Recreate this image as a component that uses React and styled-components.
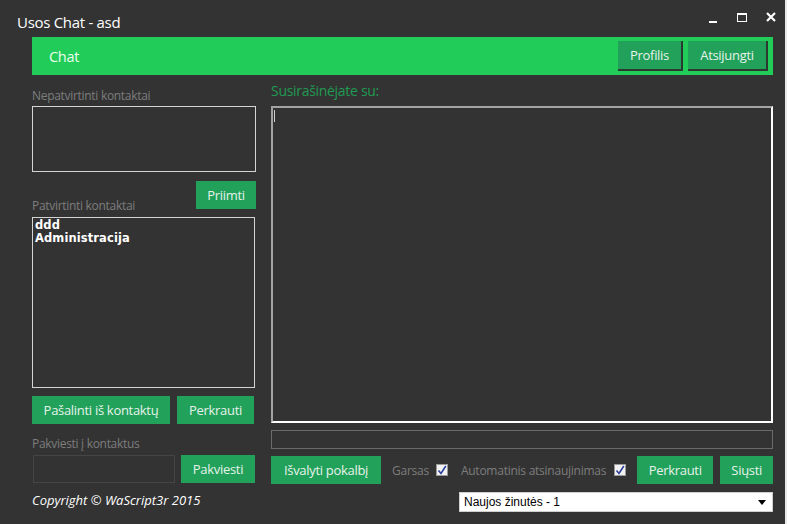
import React from 'react';
import styled, { createGlobalStyle } from 'styled-components';

const GlobalStyle = createGlobalStyle`
  html, body {
    margin: 0;
    padding: 0;
    background: #e9e9e9;
  }
  body {
    font-family: "Open Sans", "Noto Sans", sans-serif;
  }
`;

const Window = styled.div`
  width: 785px;
  height: 524px;
  background: #333333;
  display: flex;
  flex-direction: column;
  box-sizing: border-box;
  overflow: hidden;
`;

const TitleBar = styled.div`
  height: 37px;
  display: flex;
  align-items: flex-start;
  justify-content: space-between;
  padding-left: 17px;
  box-sizing: border-box;
`;

const Title = styled.div`
  color: #ffffff;
  font-size: 15px;
  margin-top: 12px;
  letter-spacing: -0.3px;
`;

const Controls = styled.div`
  display: flex;
  margin-top: 8px;
  margin-right: 0;
`;

const CtrlBtn = styled.div`
  width: 29px;
  height: 17px;
  display: flex;
  align-items: center;
  justify-content: center;
`;

const Header = styled.div`
  margin: 0 12px 0 32px;
  height: 38px;
  background: #21cc59;
  display: flex;
  align-items: center;
  padding: 0 5px 0 17px;
  box-sizing: border-box;
`;

const HeaderTitle = styled.div`
  flex: 1;
  color: #eaffef;
  font-size: 14.5px;
  letter-spacing: -0.3px;
`;

const Button = styled.button`
  background: #21a15a;
  color: #e6f2ea;
  border: none;
  font-family: inherit;
  font-size: 13px;
  letter-spacing: -0.3px;
  height: ${p => p.$h || 28}px;
  width: ${p => p.$w}px;
  flex: none;
  padding: 0;
  margin-left: ${p => p.$ml || 0}px;
  box-sizing: border-box;
  ${p => p.$raised && `
    border-right: 2px solid #2b3a30;
    border-bottom: 2px solid #2b3a30;
  `}
`;

const Body = styled.div`
  display: flex;
  gap: 15px;
  margin: 0 12px 0 32px;
  padding-top: 11px;
  flex: 1;
`;

const LeftCol = styled.div`
  width: 224px;
  display: flex;
  flex-direction: column;
`;

const RightCol = styled.div`
  width: 502px;
  min-width: 0;
  display: flex;
  flex-direction: column;
`;

const Label = styled.div`
  color: #7d7d7d;
  font-size: 12px;
  line-height: 14px;
  letter-spacing: -0.3px;
  margin-top: ${p => p.$mt || 0}px;
  margin-bottom: ${p => p.$mb || 0}px;
  white-space: nowrap;
`;

const GreenLabel = styled.div`
  color: #1f9a52;
  font-size: 14px;
  line-height: 16px;
  letter-spacing: -0.3px;
  margin-top: -3px;
  margin-bottom: 7px;
`;

const ListBox = styled.div`
  height: ${p => p.$h}px;
  width: ${p => p.$w || 224}px;
  border: 1px solid #d4d4d4;
  box-sizing: border-box;
  padding: 1px 2px;
`;

const ListItem = styled.div`
  color: #ffffff;
  font-family: "DejaVu Sans", "Liberation Sans", sans-serif;
  font-weight: bold;
  font-size: 11.5px;
  line-height: 13px;
  letter-spacing: 0.1px;
`;

const AcceptRow = styled.div`
  display: flex;
  justify-content: space-between;
  align-items: flex-end;
  margin-top: 9px;
  margin-bottom: 8px;
`;

const ButtonRow = styled.div`
  display: flex;
  align-items: center;
  margin-top: ${p => p.$mt || 0}px;
`;

const DarkInput = styled.div`
  height: 28px;
  width: ${p => p.$w}px;
  border: 1px solid #454545;
  box-sizing: border-box;
  margin-left: ${p => p.$ml || 0}px;
`;

const Copyright = styled.div`
  color: #ffffff;
  font-style: italic;
  font-size: 13px;
  letter-spacing: 0;
  margin-top: 8px;
`;

const ChatArea = styled.div`
  height: 317px;
  border-top: 2px solid #a3a3a3;
  border-left: 2px solid #a3a3a3;
  border-right: 2px solid #ffffff;
  border-bottom: 2px solid #ffffff;
  box-sizing: border-box;
  padding: 2px 1px;
`;

const Caret = styled.div`
  width: 1px;
  height: 12px;
  background: #cfcfcf;
`;

const MessageInput = styled.div`
  height: 19px;
  margin-top: 7px;
  border: 1px solid #6a6a6a;
  box-sizing: border-box;
`;

const Check = styled.div`
  width: 12px;
  height: 12px;
  flex: none;
  background: #f2f2f2;
  border: 1px solid #9a9a9a;
  box-sizing: border-box;
  display: flex;
  align-items: center;
  justify-content: center;
  margin-left: ${p => p.$ml || 0}px;
`;

const OptLabel = styled.span`
  color: #7d7d7d;
  font-size: 12px;
  letter-spacing: -0.25px;
  margin-left: ${p => p.$ml || 0}px;
  white-space: nowrap;
`;

const SelectRow = styled.div`
  display: flex;
  justify-content: flex-end;
  margin-top: 8px;
`;

const Select = styled.div`
  width: 314px;
  height: 20px;
  background: #ffffff;
  border: 1px solid #cfcfcf;
  box-sizing: border-box;
  display: flex;
  align-items: center;
  justify-content: space-between;
  padding: 0 6px 0 4px;
  font-family: "Liberation Sans", Arial, sans-serif;
  font-size: 12px;
  color: #000;
`;

const CheckMark = () => (
  <svg width="10" height="10" viewBox="0 0 10 10">
    <path d="M1.5 5.5 L4 8.5 L8.8 1" fill="none" stroke="#2d3f9a" strokeWidth="1.6" />
  </svg>
);

const App = () => {
  return (
    <>
      <GlobalStyle />
      <Window>
        <TitleBar>
          <Title>Usos Chat - asd</Title>
          <Controls>
            <CtrlBtn>
              <svg width="10" height="14" viewBox="0 0 10 14">
                <rect x="1" y="11" width="8" height="2" fill="#fff" />
              </svg>
            </CtrlBtn>
            <CtrlBtn>
              <svg width="12" height="14" viewBox="0 0 12 14">
                <rect x="1.5" y="3.5" width="9" height="8" fill="none" stroke="#fff" strokeWidth="1" />
                <rect x="1" y="3" width="10" height="2" fill="#fff" />
              </svg>
            </CtrlBtn>
            <CtrlBtn>
              <svg width="12" height="14" viewBox="0 0 12 14">
                <path d="M2 3 L10 11 M10 3 L2 11" stroke="#fff" strokeWidth="2.2" />
              </svg>
            </CtrlBtn>
          </Controls>
        </TitleBar>

        <Header>
          <HeaderTitle>Chat</HeaderTitle>
          <Button $raised $w={65} $h={30}>Profilis</Button>
          <Button $raised $w={80} $h={30} $ml={5}>Atsijungti</Button>
        </Header>

        <Body>
          <LeftCol>
            <Label $mt={3} $mb={3}>Nepatvirtinti kontaktai</Label>
            <ListBox $h={66} />
            <AcceptRow>
              <Label style={{ marginBottom: -4 }}>Patvirtinti kontaktai</Label>
              <Button $w={60}>Priimti</Button>
            </AcceptRow>
            <ListBox $h={171} $w={223}>
              <ListItem>ddd</ListItem>
              <ListItem>Administracija</ListItem>
            </ListBox>
            <ButtonRow $mt={8}>
              <Button $w={138}>Pašalinti iš kontaktų</Button>
              <Button $w={77} $ml={7}>Perkrauti</Button>
            </ButtonRow>
            <Label $mt={13} $mb={4}>Pakviesti į kontaktus</Label>
            <ButtonRow>
              <DarkInput $w={142} $ml={1} />
              <Button $w={74} $ml={6}>Pakviesti</Button>
            </ButtonRow>
            <Copyright>Copyright © WaScript3r 2015</Copyright>
          </LeftCol>

          <RightCol>
            <GreenLabel>Susirašinėjate su:</GreenLabel>
            <ChatArea>
              <Caret />
            </ChatArea>
            <MessageInput />
            <ButtonRow $mt={7}>
              <Button $w={110}>Išvalyti pokalbį</Button>
              <OptLabel $ml={11}>Garsas</OptLabel>
              <Check $ml={7}><CheckMark /></Check>
              <OptLabel $ml={13}>Automatinis atsinaujinimas</OptLabel>
              <Check $ml={8}><CheckMark /></Check>
              <Button $w={76} $ml={11}>Perkrauti</Button>
              <Button $w={53} $ml={7}>Siųsti</Button>
            </ButtonRow>
            <SelectRow>
              <Select>
                <span>Naujos žinutės - 1</span>
                <svg width="8" height="5" viewBox="0 0 8 5">
                  <path d="M0 0 H8 L4 5 Z" fill="#000" />
                </svg>
              </Select>
            </SelectRow>
          </RightCol>
        </Body>
      </Window>
    </>
  );
};

export default App;
